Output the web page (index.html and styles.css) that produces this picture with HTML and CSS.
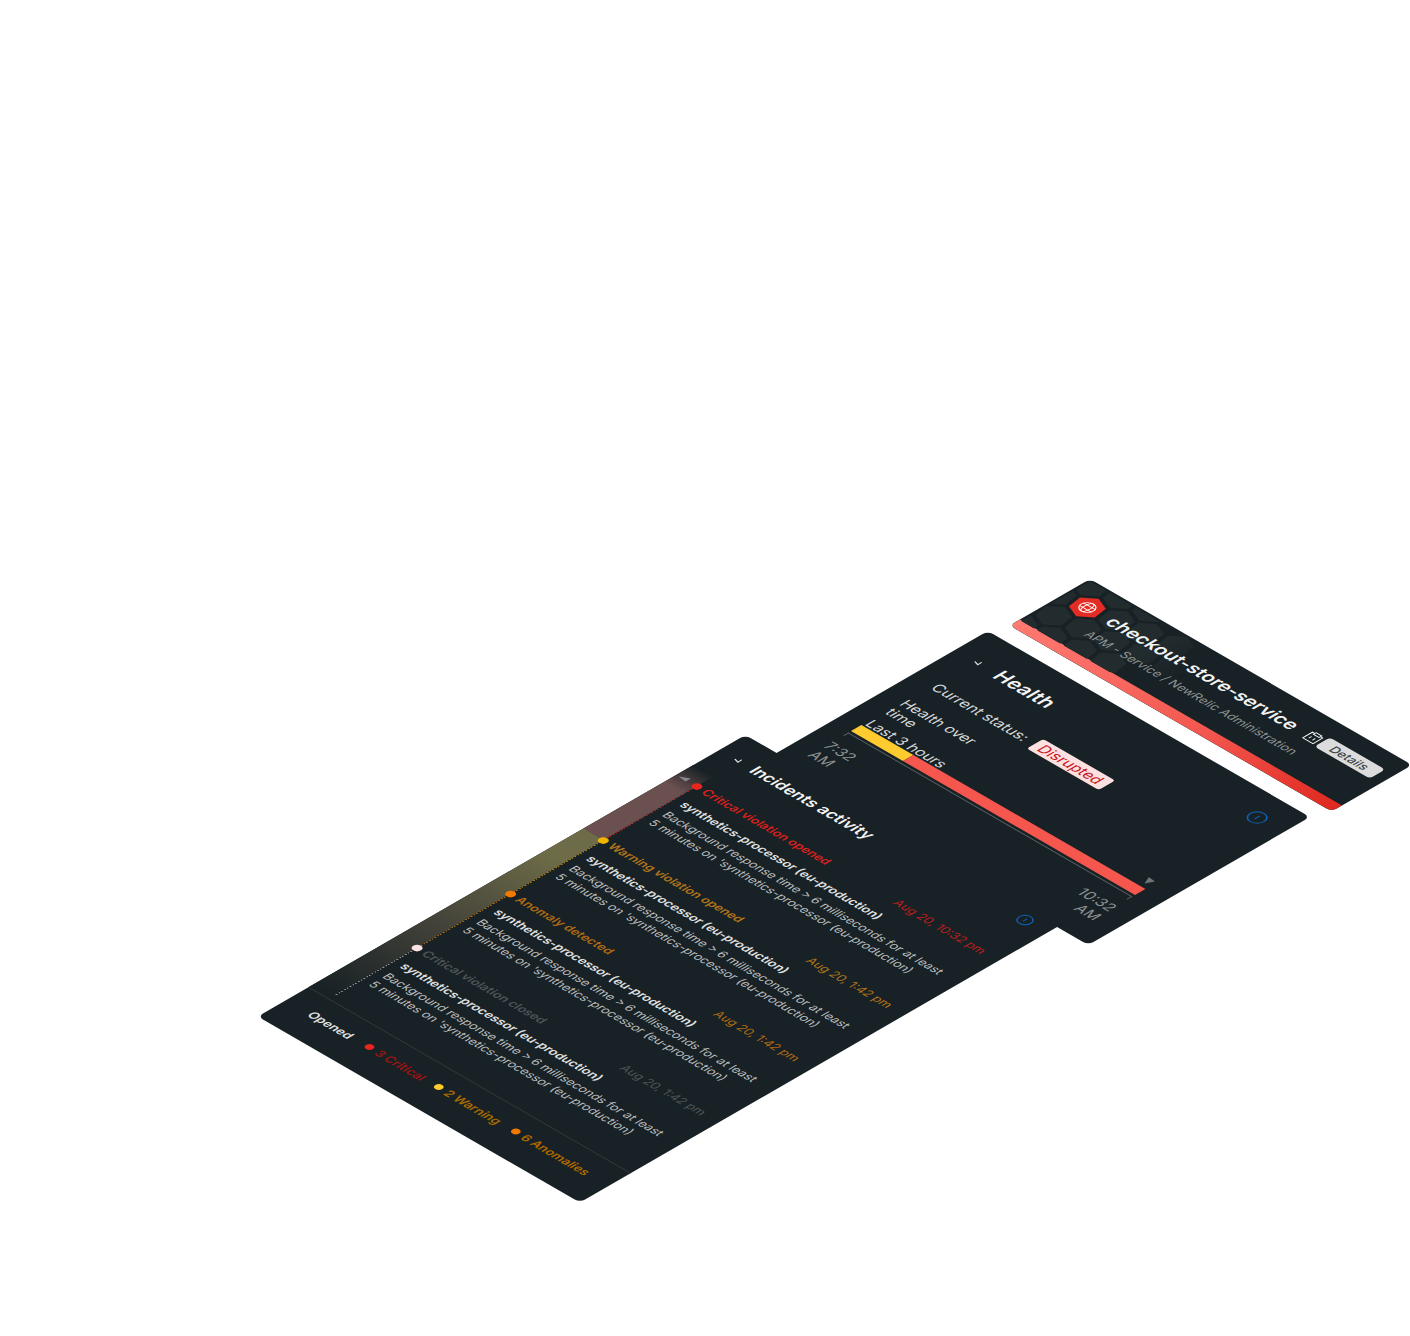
FILE: index.html
```html
<!DOCTYPE html>
<html lang="en">
<head>
  <meta charset="UTF-8" />
  <title>checkout-store-service</title>
  <link rel="stylesheet" href="styles.css">
</head>
<body>

  <svg class="defs" width="0" height="0">
    <defs>
      <polygon id="hex" points="-14.3,-5.8 -2.2,-15.2 11.8,-9.5 14.3,5.8 2.2,15.2 -11.8,9.5" />
    </defs>
  </svg>

  <div class="stage">

    <!-- Service header -->
    <header class="card service">
      <svg class="hexes" width="150" height="80" viewBox="0 0 150 80">
        <use href="#hex" x="6.5" y="4.4" />
        <use href="#hex" x="36" y="0.2" />
        <use href="#hex" x="66" y="-4" />
        <use href="#hex" x="-4.7" y="32" />
        <use href="#hex" x="54.7" y="23.8" />
        <use href="#hex" x="84" y="19.6" />
        <use href="#hex" x="114" y="15" />
        <use href="#hex" x="-16" y="60" />
        <use href="#hex" x="13.8" y="55.8" />
        <use href="#hex" x="43.5" y="51.6" />
        <use href="#hex" x="73" y="47.4" />
        <use href="#hex" x="103" y="43" />
        <use href="#hex" x="133" y="39" />
        <use href="#hex" x="2.6" y="83.6" />
        <use href="#hex" x="32" y="79" />
        <use href="#hex" x="62" y="75" />
        <use href="#hex" x="92" y="71" />
      </svg>
      <div class="service-main">
        <svg class="service-icon" width="32" height="32" viewBox="-16 -16 32 32">
          <use href="#hex" class="hex-red" />
          <g class="globe">
            <circle r="7" />
            <ellipse rx="3.2" ry="7" />
            <path d="M-7 -2.4H7M-7 2.4H7" />
          </g>
        </svg>
        <div class="service-text">
          <div class="service-row">
            <h1>checkout-store-service</h1>
            <svg class="clipboard" width="15" height="15" viewBox="0 0 14 14">
              <path d="M3.5 2.5H1.5V13H12.5V2.5H10.5" />
              <path d="M4 1H10V4H4Z" />
              <path d="M5 7V10M9 7V10" />
            </svg>
            <button class="details">Details</button>
          </div>
          <p class="service-sub">APM - Service / NewRelic Administration</p>
        </div>
      </div>
      <div class="status-strip"></div>
    </header>

    <!-- Health -->
    <section class="card health">
      <div class="section-head">
        <svg class="chevron" width="8" height="8" viewBox="0 0 8 8"><polyline points="1,5 6,6.6 5.6,1.7" /></svg>
        <h2>Health</h2>
        <svg class="info" width="18" height="18" viewBox="0 0 18 18">
          <circle cx="9" cy="9" r="8" />
          <path d="M9 6V12" />
        </svg>
      </div>
      <div class="status-row">
        <span>Current status:</span>
        <span class="pill">Disrupted</span>
      </div>
      <div class="over-time">Health over time</div>
      <div class="range">Last 3 hours</div>
      <div class="bar-wrap">
        <svg class="marker" width="10" height="10" viewBox="0 0 10 10"><polygon points="0,0 8,1 4,9" /></svg>
        <div class="bar">
          <div class="bar-part bar-warn" style="width: 18.3%"></div>
          <div class="bar-part bar-crit" style="width: 81.7%"></div>
        </div>
        <div class="axis"></div>
        <div class="axis-labels">
          <span>7:32 AM</span>
          <span>10:32 AM</span>
        </div>
      </div>
    </section>

    <!-- Incidents -->
    <section class="card incidents">
      <div class="chart"></div>
      <svg class="marker-top" width="12" height="10" viewBox="0 0 12 10"><polygon points="1,7 10,2 10,8" /></svg>
      <div class="section-head small">
        <svg class="chevron" width="8" height="8" viewBox="0 0 8 8"><polyline points="1,5 6,6.6 5.6,1.7" /></svg>
        <h2>Incidents activity</h2>
        <svg class="info" width="15" height="15" viewBox="0 0 18 18">
          <circle cx="9" cy="9" r="8" />
          <path d="M9 6V12" />
        </svg>
      </div>

      <ul class="timeline">
        <li class="event critical">
          <div class="event-head"><span class="event-title">Critical violation opened</span><span>Aug 20, 10:32 pm</span></div>
          <div class="event-name">synthetics-processor (eu-production)</div>
          <p>Background response time &gt; 6 milliseconds for at least<br>5 minutes on 'synthetics-processor (eu-production)</p>
        </li>
        <li class="event warning">
          <div class="event-head"><span class="event-title">Warning violation opened</span><span>Aug 20, 1:42 pm</span></div>
          <div class="event-name">synthetics-processor (eu-production)</div>
          <p>Background response time &gt; 6 milliseconds for at least<br>5 minutes on 'synthetics-processor (eu-production)</p>
        </li>
        <li class="event anomaly">
          <div class="event-head"><span class="event-title">Anomaly detected</span><span>Aug 20, 1:42 pm</span></div>
          <div class="event-name">synthetics-processor (eu-production)</div>
          <p>Background response time &gt; 6 milliseconds for at least<br>5 minutes on 'synthetics-processor (eu-production)</p>
        </li>
        <li class="event closed">
          <div class="event-head"><span class="event-title">Critical violation closed</span><span>Aug 20, 1:42 pm</span></div>
          <div class="event-name">synthetics-processor (eu-production)</div>
          <p>Background response time &gt; 6 milliseconds for at least<br>5 minutes on 'synthetics-processor (eu-production)</p>
        </li>
      </ul>

      <footer class="legend">
        <span class="legend-label">Opened</span>
        <span class="legend-item critical">3 Critical</span>
        <span class="legend-item warning">2 Warning</span>
        <span class="legend-item anomaly">6 Anomalies</span>
      </footer>
    </section>

  </div>

</body>
</html>
```

FILE: styles.css
```css
body {
  margin: 0;
  background: #fff;
  font-family: "Inter", "Liberation Sans", sans-serif;
  overflow: hidden;
  height: 1336px;
}

.defs {
  display: block;
}

.stage {
  width: 372px;
  transform-origin: 0 0;
  transform: matrix(0.866, 0.5, -0.866, 0.5, 1090, 579);
  display: flex;
  flex-direction: column;
  align-items: flex-start;
}

.card {
  width: 372px;
  background: #182125;
  border-radius: 6px;
  color: #e3e5e5;
  position: relative;
  box-sizing: border-box;
}

/* Service header */
.service {
  height: 93px;
  overflow: hidden;
  display: flex;
  flex-direction: column;
}

.hexes {
  position: absolute;
  left: 2px;
  top: 2px;
  overflow: visible;
  fill: #222b2e;
  -webkit-mask-image: linear-gradient(90deg, #000 70%, transparent);
  mask-image: linear-gradient(90deg, #000 70%, transparent);
}

.service-main {
  flex: 1;
  display: flex;
  position: relative;
  padding: 14px 11px 0 11px;
}

.service-icon {
  flex: none;
}

.hex-red {
  fill: #e22c24;
}

.globe {
  fill: none;
  stroke: #fff;
  stroke-width: 1;
}

.service-text {
  margin-left: 9px;
  flex: 1;
}

.service-row {
  display: flex;
  align-items: center;
  height: 24px;
  margin-top: 3px;
}

.service-row h1 {
  margin: 2px 0 0;
  font-size: 18.8px;
  line-height: 22px;
  font-weight: 600;
  color: #f2f3f3;
  white-space: nowrap;
}

.clipboard {
  margin-left: auto;
  fill: none;
  stroke: #fff;
  stroke-width: 1;
}

.details {
  margin-left: 2px;
  width: 64px;
  height: 18px;
  padding: 0;
  border: 0;
  border-radius: 4px;
  background: #dcdcdc;
  color: #3a4245;
  font: 500 12.5px "Inter", sans-serif;
}

.service-sub {
  margin: 7px 0 0;
  font-size: 12.5px;
  line-height: 16px;
  color: #8e9494;
  white-space: nowrap;
}

.status-strip {
  height: 12px;
  flex: none;
  background: linear-gradient(90deg, #ff7a72, #f2564e 60%, #e0281f);
}

/* Section heads */
.section-head {
  display: flex;
  align-items: center;
  height: 22px;
  padding: 26px 21px 0 22px;
}

.section-head h2 {
  margin: 0 0 0 18px;
  font-size: 20px;
  line-height: 22px;
  font-weight: 600;
  color: #f2f3f3;
}

.chevron {
  flex: none;
  fill: none;
  stroke: #dfe2e2;
  stroke-width: 1.2;
}

.info {
  margin: 0 0 12px auto;
  fill: none;
  stroke: #0c62b8;
  stroke-width: 1.4;
}

/* Health */
.health {
  height: 256px;
  margin-top: 18px;
  margin-left: -7px;
}

.status-row {
  display: flex;
  align-items: center;
  height: 20px;
  margin-top: 27px;
  padding-left: 24px;
  font-size: 15.2px;
  color: #d5d8d8;
}

.pill {
  margin-left: 9px;
  padding: 0 7px;
  line-height: 19px;
  border-radius: 3px;
  background: #fde1e1;
  color: #c7161d;
}

.over-time {
  width: 100px;
  margin: 16px 0 0 22px;
  font-size: 15px;
  line-height: 17px;
  color: #d5d8d8;
}

.range {
  margin: 5px 0 0 22px;
  font-size: 15px;
  line-height: 20px;
  color: #d5d8d8;
  position: relative;
  z-index: 1;
}

.bar-wrap {
  position: relative;
  margin: -3px 23px 0 21px;
}

.marker {
  position: absolute;
  right: 0;
  top: -14px;
  fill: #6f7576;
}

.bar {
  display: flex;
  height: 12px;
}

.bar-part {
  height: 100%;
}

.bar-warn {
  background: #ffcb2e;
}

.bar-crit {
  background: #f5564d;
}

.axis {
  height: 6px;
  margin-top: 3px;
  border: 1px solid #5e6567;
  border-bottom: 0;
  box-sizing: border-box;
}

.axis-labels {
  display: flex;
  justify-content: space-between;
  margin: 9px -2px 0 -1px;
  font-size: 15px;
  line-height: 18px;
  color: #8c9192;
}

.axis-labels span {
  width: 46px;
}

.axis-labels span:last-child {
  text-align: right;
}

/* Incidents */
.incidents {
  height: 563px;
  margin-top: -12px;
  margin-left: -43px;
}

.section-head.small {
  padding: 18px 18px 0 17px;
}

.section-head.small h2 {
  margin-left: 13px;
  font-size: 16.5px;
}

.chart {
  position: absolute;
  left: 0;
  top: 60px;
  width: 23px;
  height: 444px;
  background: linear-gradient(180deg, #182125 0, #6b5050 34px, #6b5050 127px, #6e6c48 127.5px, #6e6c48 170px, #45443a 300px, #182125 440px);
}

.marker-top {
  position: absolute;
  left: 2px;
  top: 73px;
  fill: #85898a;
}

.timeline {
  list-style: none;
  margin: 0;
  padding: 0;
  position: absolute;
  left: 23px;
  top: 79px;
  width: 349px;
}

.event {
  height: 107.5px;
  box-sizing: border-box;
  padding: 0 17px 0 9px;
  position: relative;
  font-size: 12.3px;
  display: flex;
  flex-direction: column;
}

.event:last-child {
  height: 95px;
}

/* dotted line drawn as a gradient, a dotted border gets lost in the skew */
.event::after {
  content: "";
  position: absolute;
  left: -0.5px;
  top: 0;
  bottom: 0;
  width: 1.6px;
  background: repeating-linear-gradient(180deg, var(--line) 0, var(--line) 1.6px, transparent 1.6px, transparent 3.2px);
}

.event::before {
  content: "";
  position: absolute;
  left: -4px;
  top: -4px;
  width: 9px;
  height: 9px;
  border-radius: 50%;
  z-index: 1;
}

.event.critical { color: #b81f1c; --line: #c6211d; }
.event.warning { color: #b0741a; --line: #c48a10; }
.event.anomaly { color: #b06a14; --line: #c47510; }
.event.closed { color: #4e5456; --line: #a5aaab; }

.event.critical::before { background: #e8251f; }
.event.warning::before { background: #f0b400; }
.event.anomaly::before { background: #f07a00; }
.event.closed::before { background: #fbe3e3; }

.event-head {
  display: flex;
  justify-content: space-between;
  margin-top: -9px;
  line-height: 20px;
}

.event-title {
  font-weight: 600;
}

.event.critical .event-title { color: #d8201c; }

.event-name {
  margin-top: 7px;
  line-height: 16px;
  font-size: 12.5px;
  font-weight: 600;
  color: #e0e2e2;
}

.event p {
  margin: 4px 0 0;
  line-height: 16px;
  color: #bcbfbf;
  white-space: nowrap;
}

.legend {
  position: absolute;
  left: 0;
  right: 0;
  bottom: 0;
  height: 59px;
  box-sizing: border-box;
  padding: 0 0 9px 27px;
  border-top: 1px solid #343a3a;
  display: flex;
  align-items: center;
  font-size: 12.5px;
  font-weight: 600;
}

.legend-label {
  color: #e0e2e2;
  width: 64px;
}

.legend-item {
  position: relative;
  padding-left: 13px;
  width: 57px;
  margin-right: 10px;
  white-space: nowrap;
}

.legend-item::before {
  content: "";
  position: absolute;
  left: 0;
  top: 3px;
  width: 8px;
  height: 8px;
  border-radius: 50%;
}

.legend-item.critical { color: #9c1414; }
.legend-item.warning { color: #a86a00; width: 66px; }
.legend-item.anomaly { color: #b06800; }

.legend-item.critical::before { background: #e8251f; }
.legend-item.warning::before { background: #ffcb2e; }
.legend-item.anomaly::before { background: #f07a00; }
```
